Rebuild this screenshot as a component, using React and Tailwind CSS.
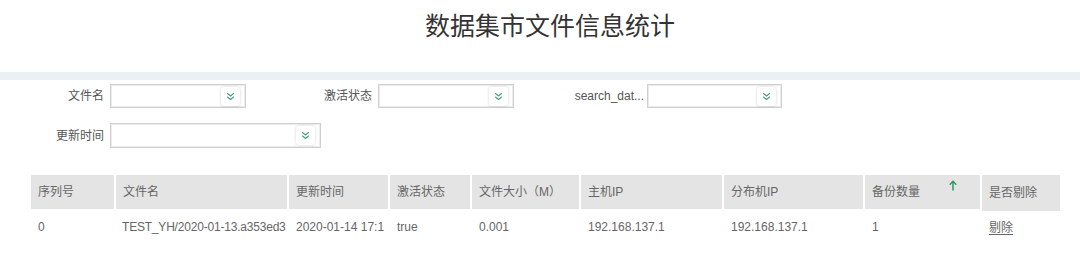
import React from "react";

const FONT = { fontFamily: '"Liberation Sans", "Noto Sans CJK SC", sans-serif' };

function Chevrons() {
  return (
    <svg width="9" height="9" viewBox="0 0 9 9" fill="none" stroke="#45a274" strokeWidth="1.1" strokeLinecap="round" strokeLinejoin="round">
      <path d="M1.5 1.5 L4.5 4 L7.5 1.5" />
      <path d="M1.5 5 L4.5 7.5 L7.5 5" />
    </svg>
  );
}

function Select({ w, h = "h-[24px]" }) {
  return (
    <div className={`${w} ${h} border border-[#cfcfcf] bg-white flex items-center justify-end pr-[5px] shadow-[inset_0_0_0_1px_#ececec]`}>
      <div className="w-[19px] h-[19px] rounded-[3px] bg-white shadow-[0_0_3px_rgba(0,0,0,0.18)] flex items-center justify-center">
        <Chevrons />
      </div>
    </div>
  );
}

function Label({ children, w }) {
  return (
    <div className={`${w} text-right pr-[6px] text-[12px] text-[#555]`}>{children}</div>
  );
}

const cols = [
  { w: "w-[83px]", h: "序列号", v: "0" },
  { w: "w-[171px]", h: "文件名", v: "TEST_YH/2020-01-13.a353ed3", tight: true },
  { w: "w-[99px]", h: "更新时间", v: "2020-01-14 17:1" },
  { w: "w-[80px]", h: "激活状态", v: "true" },
  { w: "w-[107px]", h: "文件大小（M）", v: "0.001" },
  { w: "w-[141px]", h: "主机IP", v: "192.168.137.1" },
  { w: "w-[139px]", h: "分布机IP", v: "192.168.137.1" },
  { w: "w-[115px]", h: "备份数量", v: "1", sort: true },
  { w: "w-[78px]", h: "是否剔除", v: "剔除", link: true },
];

export default function App() {
  return (
    <div className="w-[1080px] h-[256px] bg-white overflow-hidden" style={FONT}>
      <div className="h-[72px] pl-[20px] pt-[9px] text-center text-[25px] leading-[34px] text-[#333]">
        数据集市文件信息统计
      </div>
      <div className="h-[8px] bg-[#e9f1f4]" />

      <div className="mt-[4px] flex items-center">
        <Label w="w-[110px]">文件名</Label>
        <Select w="w-[136px]" />
        <Label w="w-[132px]">激活状态</Label>
        <Select w="w-[136px]" />
        <div className="w-[133px] text-right pr-[3px] text-[12px] text-[#555]">search_dat...</div>
        <Select w="w-[135px]" />
      </div>

      <div className="mt-[15px] flex items-center">
        <Label w="w-[110px]">更新时间</Label>
        <Select w="w-[211px]" h="h-[25px]" />
      </div>

      <div className="mt-[27px] ml-[31px] flex items-start gap-[2px]">
        {cols.map((c, i) => (
          <div key={i} className={`${c.w} flex flex-col`}>
            <div className={`relative ${i === cols.length - 1 ? "h-[36px]" : "h-[34px]"} bg-[#e4e4e4] flex items-center pl-[7px] text-[12px] text-[#666] whitespace-nowrap overflow-hidden`}>
              {c.h}
              {c.sort && (
                <svg className="absolute left-[84px] top-[5px]" width="8" height="11" viewBox="0 0 8 11" fill="none" stroke="#2f9a62" strokeWidth="1.5" strokeLinecap="round" strokeLinejoin="round">
                  <path d="M4 10 L4 1.5" />
                  <path d="M1.2 4.2 L4 1.3 L6.8 4.2" />
                </svg>
              )}
            </div>
            <div className={`${i === cols.length - 1 ? "h-[34px]" : "h-[36px]"} flex items-center ${c.tight ? "pl-[6px] tracking-[-0.2px]" : "pl-[7px]"} text-[12px] text-[#666] whitespace-nowrap`}>
              {c.link ? <span className="underline underline-offset-2 text-[#666]">{c.v}</span> : c.v}
            </div>
          </div>
        ))}
      </div>
    </div>
  );
}
